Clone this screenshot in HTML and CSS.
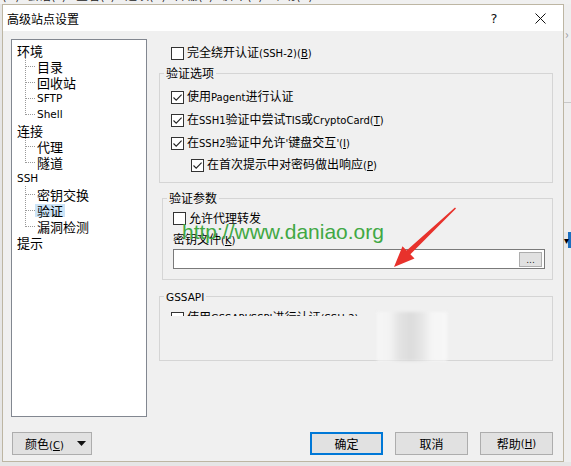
FILE: index.html
```html
<!DOCTYPE html>
<html lang="zh-CN">
<head>
<meta charset="utf-8">
<title>高级站点设置</title>
<link rel="stylesheet" href="styles.css">
</head>
<body>
<div class="menubar"><div class="menubar-in"><span>命令(M)</span><span>会话(S)</span><span>查看(V)</span><span>选项(O)</span><span>传输(T)</span><span>脚本(R)</span><span>帮助(H)</span></div></div>
<div class="stage">
  <div class="dialog">
    <div class="titlebar">
      <span class="title">高级站点设置</span>
      <span class="tbtn help">?</span>
      <span class="tbtn close"><svg width="11" height="11" viewBox="0 0 11 11"><path d="M0.5 0.5 L10.5 10.5 M10.5 0.5 L0.5 10.5" stroke="#111" stroke-width="1" fill="none"/></svg></span>
    </div>
    <div class="dbody">
      <div class="main">
        <div class="treebox">
          <ul class="tree">
            <li><span class="lbl">环境</span>
              <ul class="kids">
                <li class="kid"><span class="lbl">目录</span></li>
                <li class="kid"><span class="lbl">回收站</span></li>
                <li class="kid"><span class="lbl en">SFTP</span></li>
                <li class="kid last"><span class="lbl en">Shell</span></li>
              </ul>
            </li>
            <li><span class="lbl">连接</span>
              <ul class="kids">
                <li class="kid"><span class="lbl">代理</span></li>
                <li class="kid last"><span class="lbl">隧道</span></li>
              </ul>
            </li>
            <li><span class="lbl en">SSH</span>
              <ul class="kids">
                <li class="kid"><span class="lbl">密钥交换</span></li>
                <li class="kid"><span class="lbl sel">验证</span></li>
                <li class="kid last"><span class="lbl">漏洞检测</span></li>
              </ul>
            </li>
            <li><span class="lbl">提示</span></li>
          </ul>
        </div>
        <div class="pane">
          <div class="row r1"><span class="cb"></span><span class="txt">完全绕开认证<span class="en">(SSH-2)(<u>B</u>)</span></span></div>
          <fieldset class="g1">
            <legend>验证选项</legend>
            <div class="row"><span class="cb"><svg class="tick" width="11" height="11" viewBox="0 0 11 11"><path d="M1.5 5.5 L4.2 8.2 L9.6 2.6" fill="none" stroke="#222" stroke-width="1.1"/></svg></span><span class="txt">使用<span class="en">Pagent</span>进行认证</span></div>
            <div class="row"><span class="cb"><svg class="tick" width="11" height="11" viewBox="0 0 11 11"><path d="M1.5 5.5 L4.2 8.2 L9.6 2.6" fill="none" stroke="#222" stroke-width="1.1"/></svg></span><span class="txt">在<span class="en">SSH1</span>验证中尝试<span class="en">TIS</span>或<span class="en">CryptoCard(<u>T</u>)</span></span></div>
            <div class="row"><span class="cb"><svg class="tick" width="11" height="11" viewBox="0 0 11 11"><path d="M1.5 5.5 L4.2 8.2 L9.6 2.6" fill="none" stroke="#222" stroke-width="1.1"/></svg></span><span class="txt">在<span class="en">SSH2</span>验证中允许<span class="en">'</span>键盘交互<span class="en">'(<u>I</u>)</span></span></div>
            <div class="row indent last"><span class="cb"><svg class="tick" width="11" height="11" viewBox="0 0 11 11"><path d="M1.5 5.5 L4.2 8.2 L9.6 2.6" fill="none" stroke="#222" stroke-width="1.1"/></svg></span><span class="txt">在首次提示中对密码做出响应<span class="en">(<u>P</u>)</span></span></div>
          </fieldset>
          <fieldset class="g2">
            <legend>验证参数</legend>
            <div class="row"><span class="cb"></span><span class="txt">允许代理转发</span></div>
            <div class="row keylbl"><span class="txt">密钥文件<span class="en">(<u>K</u>)</span></span></div>
            <div class="field"><span class="browse">...</span></div>
          </fieldset>
          <fieldset class="g3">
            <legend><span class="en big">GSSAPI</span></legend>
            <div class="clip"><div class="row"><span class="cb"></span><span class="txt">使用<span class="en">GSSAPI/SSPI</span>进行认证<span class="en">(SSH-2)</span></span></div></div>
            <div class="g3fill"></div>
          </fieldset>
        </div>
      </div>
      <div class="btnrow">
        <button class="btn color"><span>颜色<span class="en">(<u>C</u>)</span></span><svg width="9" height="5" viewBox="0 0 9 5"><path d="M0 0 H9 L4.5 5 Z" fill="#111"/></svg></button>
        <div class="spacer"></div>
        <button class="btn ok">确定</button>
        <button class="btn">取消</button>
        <button class="btn">帮助<span class="en">(<u>H</u>)</span></button>
      </div>
    </div>
  </div>
  <div class="behind">
    <div class="chev">›</div>
    <div class="bline"></div>
    <div class="combo"><span>▾</span></div>
  </div>
</div>
<div class="wm">http://www.daniao.org</div>
<svg class="arrow" width="571" height="466" viewBox="0 0 571 466"><polygon points="394,267 414.5,258.5 410.4,254.2 456,208.6 455,207.4 406.6,250.6 402.5,246.2" fill="#e8322c"/></svg>
<div class="smudge"></div>
</body>
</html>
```

FILE: styles.css
```css
* { box-sizing: border-box; }

body {
  margin: 0;
  width: 571px;
  height: 466px;
  overflow: hidden;
  position: relative;
  background: #e6e6e6;
  font-family: "Noto Sans CJK SC", sans-serif;
  font-size: 12px;
  color: #000;
}

.en { font-family: "DejaVu Sans", sans-serif; font-size: 10px; }

/* app menubar peeking above the dialog */
.menubar { height: 4px; overflow: hidden; background: #f0f0f0; }
.menubar-in {
  display: flex;
  gap: 9px;
  margin-top: -13px;
  margin-left: -22px;
  line-height: 16px;
  white-space: nowrap;
  color: #222;
}
.menubar-in span { width: 40px; flex: none; }

.stage { display: flex; height: 458px; }

.dialog {
  margin-left: 2px;
  width: 562px;
  height: 458px;
  border: 1px solid #bdb6a3;
  background: #f0f0f0;
  display: flex;
  flex-direction: column;
  flex: none;
}

.titlebar {
  height: 26px;
  flex: none;
  background: #fff;
  display: flex;
  align-items: center;
}
.title { flex: 1; padding-left: 4px; font-size: 12px; }
.tbtn {
  width: 46px;
  height: 26px;
  display: flex;
  align-items: center;
  justify-content: center;
}
.help { font-family: "DejaVu Sans", sans-serif; font-size: 13px; color: #111; }

.dbody {
  flex: 1;
  padding: 8px 10px 6px 8px;
  display: flex;
  flex-direction: column;
}

.main { display: flex; height: 378px; }

/* tree */
.treebox {
  width: 136px;
  height: 378px;
  flex: none;
  border: 1px solid #828790;
  background: #fff;
}
.tree, .kids { list-style: none; margin: 0; padding: 0; }
.tree { padding: 2px 0 0 5px; }
.tree > li > .lbl {
  display: flex;
  align-items: center;
  height: 16px;
  font-size: 13px;
}
.tree .lbl.en { font-size: 10.5px; }
.kid {
  height: 16px;
  margin-left: 8px;
  padding-left: 10px;
  display: flex;
  align-items: center;
  background-image:
    repeating-linear-gradient(to bottom, #9a9a9a 0 1px, transparent 1px 2px),
    repeating-linear-gradient(to right, #9a9a9a 0 1px, transparent 1px 2px);
  background-size: 1px 100%, 9px 1px;
  background-position: 0 0, 1px 8px;
  background-repeat: no-repeat;
}
.kid.last { background-size: 1px 9px, 9px 1px; }
.kid .lbl { font-size: 13px; line-height: 13px; padding: 0 2px; }
.kid .lbl.en { font-size: 10.5px; }
.kid .lbl.sel { background: #cce4f7; }

/* right pane */
.pane {
  margin-left: 12px;
  width: 394px;
  display: flex;
  flex-direction: column;
}

.row {
  display: flex;
  align-items: center;
  height: 16px;
  white-space: nowrap;
}
.cb {
  width: 13px;
  height: 13px;
  flex: none;
  border: 1px solid #333;
  background: #fff;
  margin-right: 3px;
  display: flex;
  align-items: center;
  justify-content: center;
}
.txt { line-height: 16px; }

.r1 { margin-top: 6px; margin-left: 12px; }

fieldset {
  margin: 0;
  min-width: 0;
  border: 1px solid #d5d5d5;
}
legend {
  padding: 0 2px;
  margin-left: -7px;
  line-height: 16px;
}
.big { font-size: 10.5px; }

.g1 { margin-top: 4px; width: 394px; padding: 8px 0 9px 11px; }
.g1 .row + .row { margin-top: 7px; }
.g1 .row.last { margin-top: 6px; }
.indent { margin-left: 20px; }

.g2 { margin-top: 7px; margin-left: 3px; width: 391px; padding: 4px 0 10px 10px; }
.g2 legend { margin-left: -6px; }
.keylbl { margin-top: 6px; }
.field {
  margin-top: 1px;
  width: 372px;
  height: 20px;
  border: 1px solid #7a7a7a;
  background: #fff;
  display: flex;
  align-items: center;
  justify-content: flex-end;
  padding-right: 2px;
}
.browse {
  width: 23px;
  height: 15px;
  border: 1px solid #adadad;
  background: #e1e1e1;
  font-family: "DejaVu Sans", sans-serif;
  font-size: 9px;
  line-height: 15px;
  text-align: center;
  color: #222;
}

.g3 { margin-top: 8px; width: 394px; padding: 5px 0 0 11px; }
.clip { height: 6px; overflow: hidden; }
.g3fill { height: 44px; }

/* buttons */
.btnrow {
  display: flex;
  gap: 12px;
  margin-top: 15px;
  height: 23px;
}
.spacer { flex: 1; }
.btn {
  width: 73px;
  height: 23px;
  flex: none;
  margin: 0;
  padding: 0;
  border: 1px solid #adadad;
  background: #e1e1e1;
  font-family: "Noto Sans CJK SC", sans-serif;
  font-size: 12px;
  color: #000;
  display: flex;
  align-items: center;
  justify-content: center;
}
.btn.ok { border: 2px solid #0078d7; }
.btn.color {
  width: 80px;
  margin-left: 1px;
  justify-content: space-between;
  padding: 0 5px 0 12px;
}

/* app window behind */
.behind {
  flex: 1;
  background: #eeeeee;
  display: flex;
  flex-direction: column;
}
.chev { margin-top: 22px; height: 16px; line-height: 16px; color: #9a9a9a; font-size: 12px; padding-left: 1px; }
.bline { margin-top: 60px; height: 1px; background: #c8c8c8; }
.combo {
  margin-top: 129px;
  height: 16px;
  background: #1c6fbf;
  font-size: 10px;
  line-height: 16px;
  color: #000;
}
.combo span { display: block; width: 4px; background: #e8e8e8; height: 16px; }

/* overlays pasted onto the screenshot */
.wm {
  position: absolute;
  left: 182px;
  top: 220px;
  font-family: "Liberation Sans", sans-serif;
  font-size: 21px;
  line-height: 24px;
  color: #41a844;
  white-space: nowrap;
}
.arrow { position: absolute; left: 0; top: 0; pointer-events: none; }
.smudge {
  position: absolute;
  left: 377px;
  top: 312px;
  width: 70px;
  height: 49px;
  background: linear-gradient(to right, #f6f6f6 0%, #f3f3f3 18%, #e3e3e3 32%, #dcdcdc 48%, #e4e4e4 62%, #f5f5f5 78%, #f7f7f7 100%);
  filter: blur(1.5px);
}
```
